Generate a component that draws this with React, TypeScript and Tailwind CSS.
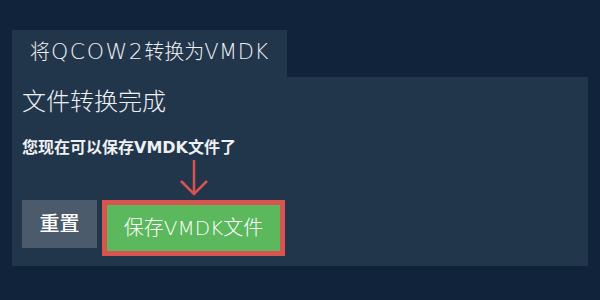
import React from "react";

const FONT = { fontFamily: '"DejaVu Sans", "Noto Sans CJK SC", sans-serif' };

export default function App() {
  return (
    <div className="w-[600px] h-[300px] bg-[#10233a] pt-[30px] px-[12px] text-[#eef0f2] overflow-hidden" style={FONT}>
      <div className="inline-flex h-[47px] items-center px-[18px] pb-[4px] bg-[#22364b] text-[20px] font-light">
        <span className="leading-[28px]">
          将<span className="text-[22px] tracking-[1.5px] ml-[1px]">QCOW2</span>转换为<span className="text-[21px] tracking-[0.5px]">VMDK</span>
        </span>
      </div>
      <div className="bg-[#22364b] h-[189px] pl-[10px] pt-[9px]">
        <div className="text-[24px] leading-[32px] font-light">文件转换完成</div>
        <div className="mt-[18px] text-[16px] leading-[24px] font-bold">您现在可以保存VMDK文件了</div>
        <div className="mt-[40px] flex items-start gap-[5px]">
          <button className="w-[75px] h-[48px] bg-[#4b5b6b] text-white text-[20px] font-medium flex items-center justify-center">
            重置
          </button>
          <div className="relative">
            <svg
              className="absolute left-1/2 -translate-x-1/2 bottom-[calc(100%+4px)]"
              width="28"
              height="36"
              viewBox="0 0 28 36"
              fill="none"
              stroke="#d9534f"
              strokeWidth="2.5"
            >
              <line x1="14" y1="0" x2="14" y2="34" />
              <polyline points="1,21 14,34 27,21" />
            </svg>
            <button className="w-[183px] h-[56px] border-[5px] border-[#d9534f] bg-[#5cb85c] text-white text-[20px] font-light flex items-center justify-center">
              保存VMDK文件
            </button>
          </div>
        </div>
      </div>
    </div>
  );
}
